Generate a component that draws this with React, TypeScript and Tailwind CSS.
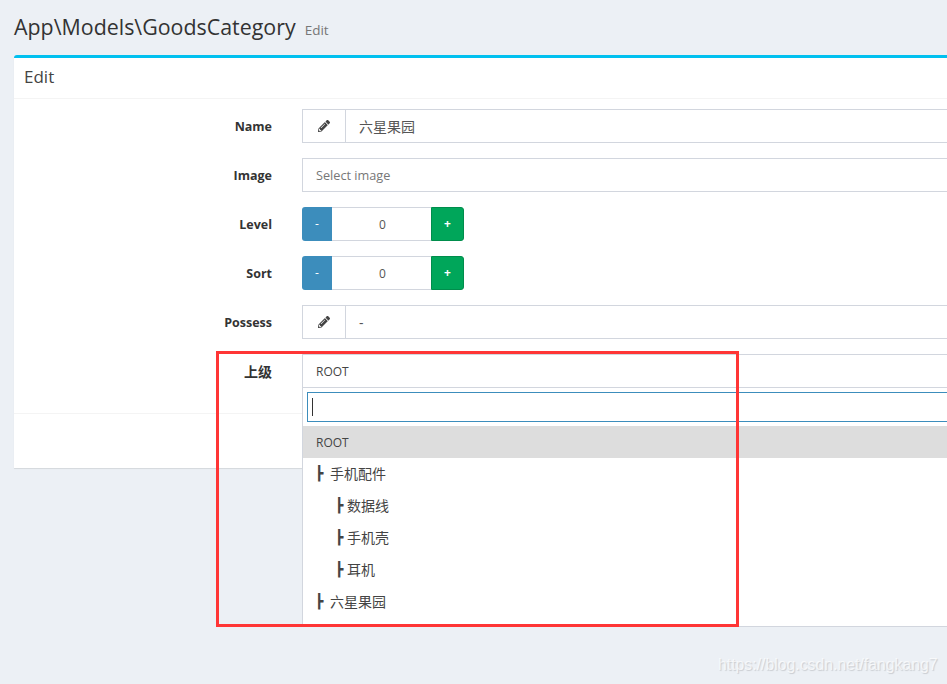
import { FaPencilAlt } from "react-icons/fa";

const font = "font-['Open_Sans','Noto_Sans_CJK_SC',sans-serif]";

function Label({ children }: { children: React.ReactNode }) {
  return (
    <label className="w-[258px] shrink-0 pt-[8px] text-right text-[12.5px] leading-[20px] font-bold text-[#333]">
      {children}
    </label>
  );
}

function PencilInput({ value }: { value: string }) {
  return (
    <div className="ml-[30px] flex h-[34px] flex-1 border border-[#d2d6de]">
      <div className="flex w-[43px] shrink-0 items-center justify-center border-r border-[#d2d6de] text-[#444]">
        <FaPencilAlt className="h-[12px] w-[12px]" />
      </div>
      <div className="flex flex-1 items-center pl-[13px] text-[14px] text-[#555]">{value}</div>
    </div>
  );
}

function NumberInput() {
  return (
    <div className="ml-[30px] flex h-[34px] w-[162px] text-[12px]">
      <div className="flex w-[30px] items-center justify-center rounded-l-[3px] bg-[#3c8dbc] text-white">-</div>
      <div className="flex flex-1 items-center justify-center border-y border-[#d2d6de] pl-[2px] pt-[1px] text-[#555]">0</div>
      <div className="flex w-[33px] items-center justify-center rounded-r-[3px] border border-[#008d4c] bg-[#00a65a] font-bold text-white">+</div>
    </div>
  );
}

const options = [
  { label: "手机配件", indent: "pl-[12px]", gap: "ml-[6.6px]" },
  { label: "数据线", indent: "pl-[32px]", gap: "ml-[3.6px]" },
  { label: "手机壳", indent: "pl-[32px]", gap: "ml-[3.6px]" },
  { label: "耳机", indent: "pl-[32px]", gap: "ml-[3.6px]" },
  { label: "六星果园", indent: "pl-[12px]", gap: "ml-[6.6px]" },
];

export default function App() {
  return (
    <div className={`relative h-[684px] w-full overflow-hidden bg-[#ecf0f5] ${font}`}>
      <div className="flex h-[55px] items-baseline pl-[14px] pt-[10px]">
        <h1 className="text-[21.4px] leading-[33px] text-[#333]">App\Models\GoodsCategory</h1>
        <small className="ml-[9px] text-[13.5px] text-[#777]">Edit</small>
      </div>

      <div className="relative ml-[14px] w-[1000px] rounded-t-[3px] border-t-[3px] border-[#00c0ef] bg-white shadow-[0_1px_1px_rgba(0,0,0,0.1)]">
        <div className="flex h-[41px] items-center border-b border-[#f4f4f4] pb-[2px] pl-[10px] text-[17px] text-[#444]">Edit</div>

        <div className="flex flex-col gap-[15px] pb-[25px] pt-[10px]">
          <div className="flex">
            <Label>Name</Label>
            <PencilInput value="六星果园" />
          </div>
          <div className="flex">
            <Label>Image</Label>
            <div className="ml-[30px] flex h-[34px] flex-1 items-center border border-[#d2d6de] pl-[13px] pt-[1px] text-[12.7px] text-[#777]">Select image</div>
          </div>
          <div className="flex">
            <Label>Level</Label>
            <NumberInput />
          </div>
          <div className="flex">
            <Label>Sort</Label>
            <NumberInput />
          </div>
          <div className="flex">
            <Label>Possess</Label>
            <PencilInput value="-" />
          </div>
          <div className="flex">
            <Label>
              <span className="text-[14px]">上级</span>
            </Label>
            <div className="ml-[30px] flex h-[34px] flex-1 items-center border border-[#d2d6de] pl-[13px] pt-[1px] text-[12px] text-[#444]">ROOT</div>
          </div>
        </div>

        <div className="h-[55px] border-t border-[#f4f4f4]" />

        <div className="absolute left-[288px] top-[330px] w-[800px] border-b border-l border-[#d2d6de] bg-white pb-[8px] text-[14px] text-[#444]">
          <div className="p-[4px]">
            <div className="flex h-[30px] items-center border border-[#3c8dbc] pl-[4px]">
              <span className="h-[18px] w-px bg-[#333]" />
            </div>
          </div>
          <div className="flex h-[32px] items-center bg-[#ddd] pl-[13px] pt-[2px] text-[12px]">ROOT</div>
          {options.map((option) => (
            <div key={option.label} className={`flex h-[32px] items-center pb-[2px] ${option.indent}`}>
              <span className="shrink-0 font-['DejaVu_Sans_Mono',monospace]">┣</span>
              <span className={option.gap}>{option.label}</span>
            </div>
          ))}
        </div>
      </div>

      <div className="absolute left-[216px] top-[351px] h-[276px] w-[523px] border-[3px] border-[#ff3535]" />

      <div className="absolute left-[718px] top-[653px] font-['Liberation_Sans',sans-serif] text-[15.8px] text-white/70 [text-shadow:1px_1px_1px_rgba(0,0,0,0.15)]">
        https://blog.csdn.net/fangkang7
      </div>
    </div>
  );
}
